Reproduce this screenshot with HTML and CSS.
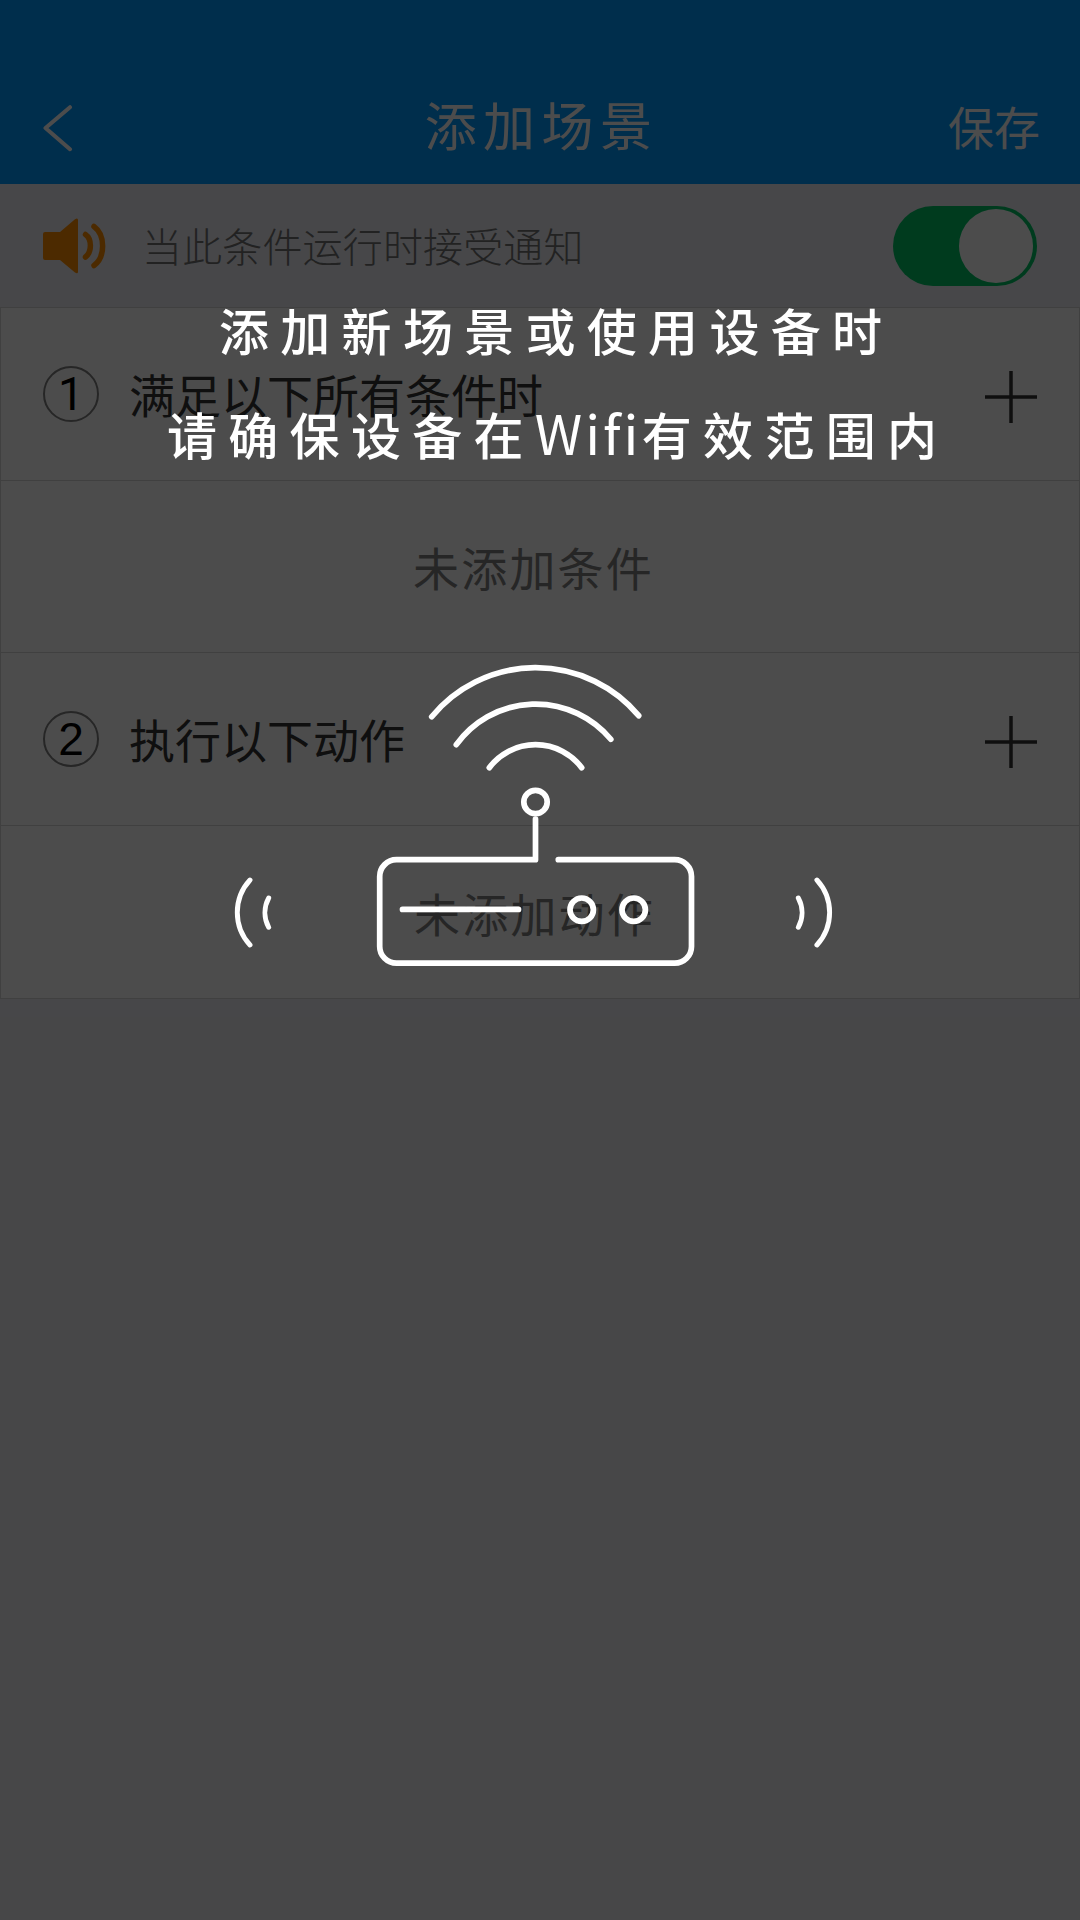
FILE: index.html
```html
<!DOCTYPE html>
<html lang="zh-CN">
<head>
<meta charset="utf-8">
<title>添加场景</title>
<link rel="stylesheet" href="styles.css">
</head>
<body>
<div class="screen">
  <header class="navbar">
    <svg class="back" viewBox="0 0 30 48" fill="none"><path d="M27 3.2 2.5 24 27 45.2"/></svg>
    <h1 class="title">添加场景</h1>
    <span class="save">保存</span>
  </header>
  <section class="notice">
    <svg class="speaker" viewBox="0 0 64 56">
      <path class="cone" d="M2 14h15L32 1.2Q35 -.6 35 2V53.500Q35 56.500 32 54.600L17 42H2Q0 42 0 40V16Q0 14 2 14Z"/>
      <path class="wave" d="M42.500 16.500C49 21 49 34 42.500 39M51 8.500C62.500 17 62.500 39 51 47.500"/>
    </svg>
    <span class="notice-text">当此条件运行时接受通知</span>
    <span class="toggle"><span class="knob"></span></span>
  </section>
  <main class="panel">
    <div class="row head">
      <span class="num one">1</span>
      <span class="label">满足以下所有条件时</span>
      <svg class="plus" viewBox="0 0 52 52"><path d="M26 0V52M0 26H52"/></svg>
    </div>
    <div class="row empty"><span>未添加条件</span></div>
    <div class="row head">
      <span class="num">2</span>
      <span class="label">执行以下动作</span>
      <svg class="plus" viewBox="0 0 52 52"><path d="M26 0V52M0 26H52"/></svg>
    </div>
    <div class="row empty last"><span>未添加动作</span></div>
  </main>
  <div class="overlay">
    <p class="tip first">添加新场景或使用设备时</p>
    <p class="tip second">请确保设备在<span class="latin">Wifi</span>有效范围内</p>
    <svg class="router" viewBox="230 660 610 310">
      <path d="M431.700 716.700A134.700 134.700 0 0 1 638.700 715.700M456.300 744.700A97.800 97.800 0 0 1 610.800 739.300M489.300 767.700A57.900 57.900 0 0 1 581.700 767.700"/>
      <circle cx="535.500" cy="802" r="11.700"/>
      <circle cx="581.700" cy="909.700" r="11.700"/>
      <circle cx="633.700" cy="909.700" r="11.700"/>
      <path d="M535.500 819V859.700H396.500A16.800 16.800 0 0 0 379.700 876.500V946.400A16.800 16.800 0 0 0 396.500 963.200H674.700A16.800 16.800 0 0 0 691.500 946.400V876.500A16.800 16.800 0 0 0 674.700 859.700H558.300M402.500 909.400H518.500"/>
      <path class="side" d="M250 880A47.900 47.900 0 0 0 250 945M268.700 898A30.600 30.600 0 0 0 268.700 927.300M798.300 898A30.600 30.600 0 0 1 798.300 927.300M816.900 880A47.900 47.900 0 0 1 816.900 945"/>
    </svg>
  </div>
</div>
</body>
</html>
```

FILE: styles.css
```css
* { box-sizing: border-box; margin: 0; padding: 0; }
body { font-family: "Noto Sans CJK SC", sans-serif; background: #edeef3; }
.screen { position: relative; width: 1080px; height: 1920px; overflow: hidden; background: #edeef3; }

.navbar {
  height: 184px;
  padding: 66px 40px 0 43px;
  display: grid;
  grid-template-columns: 140px 1fr 140px;
  align-items: center;
  background: #0099fe;
  color: #fff;
}
.back { width: 30px; height: 48px; margin-top: 5px; stroke: #fff; stroke-width: 4; stroke-linecap: round; stroke-linejoin: round; }
.title { font-size: 52px; font-weight: 400; line-height: 76px; letter-spacing: 6.400px; text-align: center; margin-top: -3px; }
.save { font-size: 46px; font-weight: 400; line-height: 76px; text-align: right; }

.notice { height: 123px; padding: 0 43px; display: flex; align-items: center; }
.speaker { width: 64px; height: 56px; margin-top: 1px; }
.cone { fill: #ff8e00; }
.wave { fill: none; stroke: #ff8e00; stroke-width: 5.500; stroke-linecap: round; }
.notice-text { margin: -2px 0 0 35px; flex: 1; font-size: 40px; font-weight: 300; letter-spacing: .15px; color: #737373; }
.toggle { width: 144px; height: 80px; padding: 3px 4px; border-radius: 40px; background: #00c666; display: flex; justify-content: flex-end; }
.knob { width: 74px; height: 74px; border-radius: 50%; background: #fff; }

.panel { height: 692px; border: 1px solid #d6d6d6; background: #fff; display: grid; grid-template-rows: repeat(4, 1fr); }
.row { display: flex; align-items: center; border-bottom: 1px solid #d6d6d6; }
.last { border-bottom: 0; }
.head { padding: 0 42px; }
.num {
  width: 56px;
  height: 56px;
  border: 2px solid #808080;
  border-radius: 50%;
  text-align: center;
  font: 46px/52px "Liberation Sans", sans-serif;
  color: #000;
}
.one { font-family: Roboto, sans-serif; line-height: 53px; }
.label { margin: -1px 0 0 30px; flex: 1; font-size: 46px; font-weight: 400; color: #333; }
.plus { width: 52px; height: 52px; margin-top: 7px; stroke: #333; stroke-width: 3.500; }
.empty { justify-content: center; padding: 0 13px 0 0; font-size: 46px; font-weight: 400; letter-spacing: 2.200px; color: #808080; }
.last { padding-right: 11px; }

.overlay {
  position: absolute;
  inset: 0;
  padding-top: 289px;
  display: flex;
  flex-direction: column;
  background: rgba(0, 0, 0, .7);
  color: #fff;
}
.tip { height: 80px; font-size: 50px; font-weight: 500; line-height: 80px; letter-spacing: 11.300px; white-space: nowrap; }
.first { padding-left: 219px; }
.second { margin-top: 23px; padding-left: 167px; }
.latin { display: inline-block; width: 107px; font-size: 54px; letter-spacing: 3px; font-weight: 400; }
.router { width: 610px; height: 310px; margin: 188px 0 0 230px; fill: none; stroke: #fff; stroke-width: 5.700; stroke-linecap: round; stroke-linejoin: round; }
.side { stroke-width: 4.900; }
```
